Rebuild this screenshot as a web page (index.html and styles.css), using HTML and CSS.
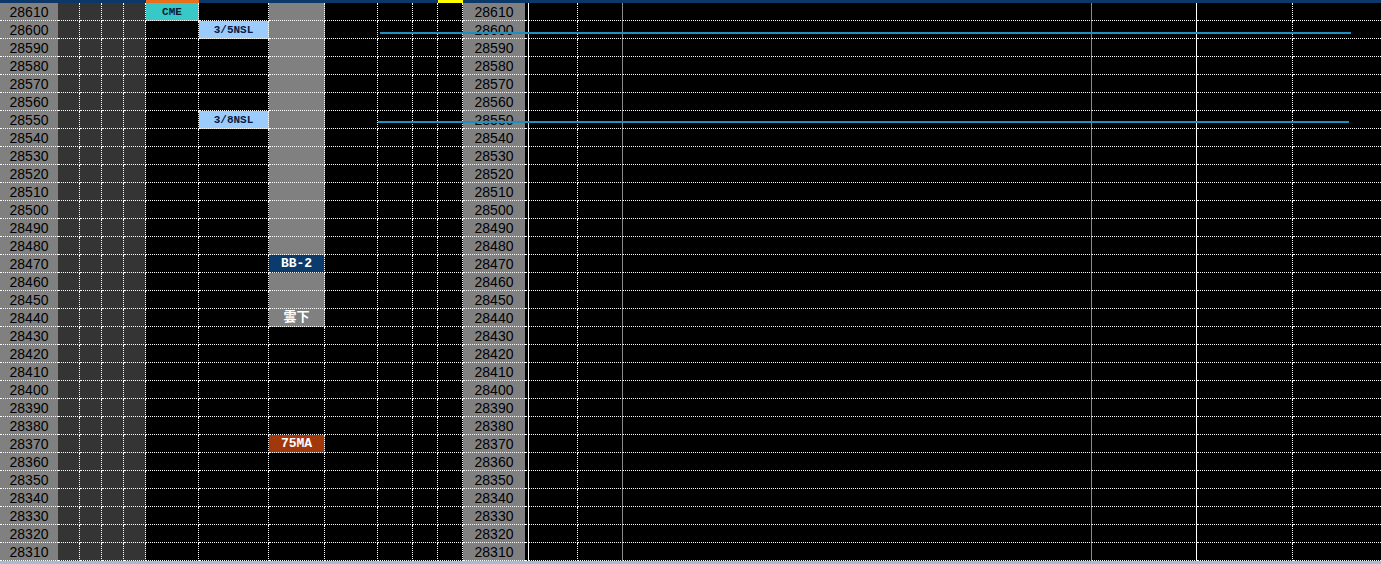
FILE: index.html
```html
<!DOCTYPE html>
<html lang="ja">
<head>
    <meta charset="UTF-8">
    <meta name="viewport" content="width=device-width, initial-scale=1.0">
    <title>板</title>
    <link rel="stylesheet" href="styles.css">
</head>
<body>
    <div class="topbar">
        <div></div>
        <div class="mark-orange"></div>
        <div></div>
        <div class="mark-yellow"></div>
        <div></div>
    </div>
    <div class="board" id="board">
        <div class="level-line" style="top: 29px; left: 380px; width: 971px;"></div>
        <div class="level-line" style="top: 118px; left: 378px; width: 971px;"></div>
    </div>
    <div class="scrollbar"></div>

    <script>
        const board = document.getElementById('board');
        const cols = ['price', 'dark', 'dark', 'dark', 'dark', 'blank', 'blank', 'band', 'blank', 'blank', 'blank', 'blank',
                      'price', 'r-white', 'r-dot', 'r-gray', 'r-gray', 'r-white', 'r-dot', 'r-end'];

        // 行番号 -> { 列番号: [表示, クラス] }
        const tags = {
            0: { 5: ['CME', 'tag-cme'] },
            1: { 6: ['3/5NSL', 'tag-nsl'] },
            6: { 6: ['3/8NSL', 'tag-nsl'] },
            14: { 7: ['BB-2', 'tag-bb'] },
            17: { 7: ['雲下', 'tag-cloud'] },
            24: { 7: ['75MA', 'tag-ma'] }
        };

        for (let i = 0; i < 31; i++) {
            const price = 28610 - i * 10;
            const row = document.createElement('div');
            row.className = 'row';
            cols.forEach((name, c) => {
                const cell = document.createElement('div');
                cell.className = 'cell ' + name;
                if (name === 'price') cell.textContent = price;
                if (name === 'band' && i <= 17) cell.classList.add('band-on'); // 雲の範囲
                const tag = tags[i] && tags[i][c];
                if (tag) {
                    cell.textContent = tag[0];
                    cell.classList.add('tag', tag[1]);
                }
                row.appendChild(cell);
            });
            board.insertBefore(row, board.querySelector('.level-line'));
        }
    </script>
</body>
</html>
```

FILE: styles.css
```css
* {
    box-sizing: border-box;
    margin: 0;
    padding: 0;
}

body {
    background-color: #000;
    overflow: hidden;
    font-family: "Liberation Sans", Arial, sans-serif;
}

.topbar {
    display: grid;
    grid-template-columns: 146px 53px 239px 25px 1fr;
    height: 3px;
    background-color: #0b3769;
}

.mark-orange {
    background-color: #e8701c;
}

.mark-yellow {
    background-color: #ffff00;
}

.board {
    position: relative;
}

.row {
    display: grid;
    grid-template-columns: 58px 22px 22px 22px 22px 53px 70px 56px 53px 35px 25px 25px 62px 4px 49px 45px 469px 105px 96px 1fr;
    height: 18px;
}

.cell {
    background-color: #000;
    border-bottom: 1px dotted #fff;
    padding-top: 2px;
    line-height: 15px;
    text-align: center;
    white-space: nowrap;
    overflow: hidden;
}

.price {
    background-color: #808080;
    color: #000;
    font-size: 14px;
}

.dark {
    background-color: #343434;
    border-right: 1px dotted #fff;
}

.blank, .band {
    border-right: 1px dotted #fff;
}

.band-on {
    background-color: #808080;
}

.r-white {
    border-right: 1px solid #fff;
}

.r-dot {
    border-right: 1px dotted #fff;
}

.r-gray {
    border-right: 1px solid #8a8a8a;
}

/* 板上のラベル */
.tag {
    font-family: "Liberation Mono", "Noto Sans CJK JP", monospace;
    font-weight: bold;
    font-size: 11px;
    padding-top: 1px;
    line-height: 16px;
}

.tag-cme {
    background-color: #38c8c8;
    color: #0a1a30;
}

.tag-nsl {
    background-color: #9cccfc;
    color: #0a1a40;
}

.tag-bb {
    background-color: #0b3b6d;
    color: #fff;
    font-size: 13px;
}

.tag-cloud {
    background-color: #808080;
    color: #fff;
    font-size: 13px;
}

.tag-ma {
    background-color: #a0380c;
    color: #fff;
    font-size: 13px;
}

.level-line {
    position: absolute;
    height: 2px;
    background-color: #1e8fbf;
}

.scrollbar {
    height: 3px;
    background-color: #a6bad6;
}
```
